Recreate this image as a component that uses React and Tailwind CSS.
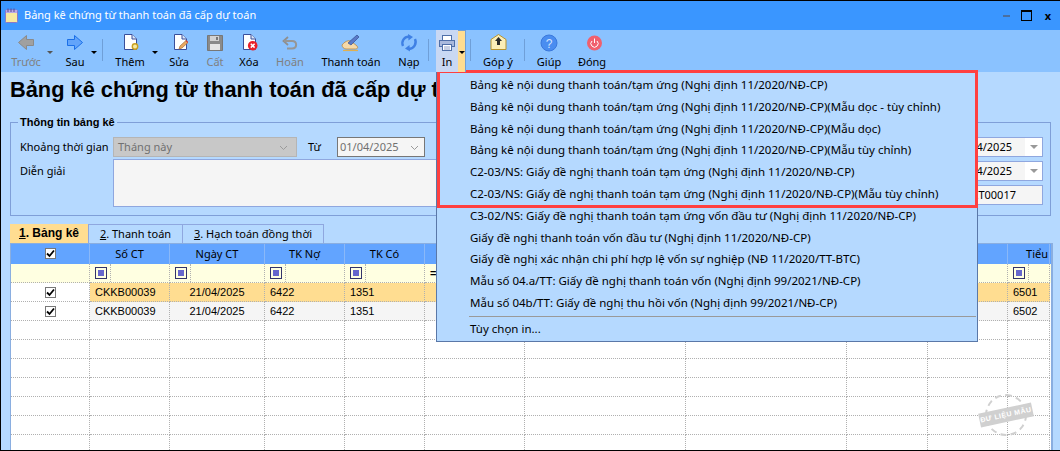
import React from "react";

const Arrow = ({ color, stroke, flip }) => (
  <svg width="18" height="18" viewBox="0 0 18 18" className={flip ? "-scale-x-100" : ""}>
    <path d="M1.5 8.5 L9.5 1.5 V5.5 H16.5 V11.5 H9.5 V15.5 Z" fill={color} stroke={stroke} />
  </svg>
);

const Page = ({ x = 3, children }) => (
  <svg width="18" height="18" viewBox="0 0 18 18">
    <path d={`M${x + 0.5} 0.5 H${x + 8} L${x + 12.5} 5 V15.5 H${x + 0.5} Z`} fill="#fff" stroke="#3a4f9a" />
    <path d={`M${x + 8} 0.5 V5 H${x + 12.5}`} fill="#dbe6f7" stroke="#3a4f9a" />
    {children}
  </svg>
);

const icons = {
  back: <Arrow color="#a0a0a0" stroke="#8a8a8a" />,
  next: <Arrow color="#62a4fa" stroke="#1a6fe8" flip />,
  add: (
    <Page>
      <circle cx="14" cy="12.5" r="2.7" fill="#f7e9a0" stroke="#c8a020" strokeWidth="1.4" />
    </Page>
  ),
  edit: (
    <Page x={4}>
      <path d="M9 15 L10 12 L16 6.5 L18 8.5 L12 14 Z" fill="#eaa860" stroke="#a8703a" strokeWidth="0.7" />
      <path d="M16 6.5 L18 8.5" stroke="#d04040" strokeWidth="1.2" />
    </Page>
  ),
  save: (
    <svg width="16" height="16" viewBox="0 0 16 16">
      <path d="M0.5 0.5 H15.5 V15.5 H0.5 Z" fill="#8a8a8a" stroke="#777" />
      <rect x="3" y="1" width="9" height="5" fill="#d2d2d2" />
      <rect x="9" y="2" width="2" height="3" fill="#777" />
      <rect x="3" y="9" width="10" height="6" fill="#e6e6e6" />
    </svg>
  ),
  del: (
    <Page>
      <circle cx="12.7" cy="11.7" r="4.8" fill="#e8202a" />
      <path d="M10.8 9.8 L14.6 13.6 M14.6 9.8 L10.8 13.6" stroke="#fff" strokeWidth="1.5" />
    </Page>
  ),
  undo: (
    <svg width="16" height="18" viewBox="0 0 16 18" fill="none">
      <path d="M6 3 L1.5 7 L6 11" stroke="#8f8f8f" strokeWidth="1.8" />
      <path d="M2 7 H10 C15.5 7 15.5 14.5 10 14.5 H5" stroke="#969696" strokeWidth="2" />
    </svg>
  ),
  pay: (
    <svg width="20" height="18" viewBox="0 0 20 18">
      <path d="M1 11 C5 6 9 6 11 8 L16 12 C17.5 14 16 15 14 15 H5 C3 15 1 13 1 11 Z" fill="#f6d9a8" stroke="#b8863f" strokeWidth="0.8" />
      <path d="M7 9 L16 1 L18 3 L10 11 Z" fill="#5a79c8" stroke="#33508f" strokeWidth="0.7" />
      <path d="M2 16.5 H17" stroke="#e0b050" strokeWidth="1.2" />
    </svg>
  ),
  reload: (
    <svg width="18" height="18" viewBox="0 0 18 18" fill="none">
      <path d="M3 12 C1 7 4 3 9 2.5" stroke="#3f80e4" strokeWidth="2.4" />
      <path d="M8 0 L13 3 L8.5 6.5 Z" fill="#3f80e4" />
      <path d="M15 5 C17 10 14 14.5 9 15" stroke="#3f80e4" strokeWidth="2.4" />
      <path d="M10 17.5 L5 14.5 L9.5 11 Z" fill="#3f80e4" />
    </svg>
  ),
  print: (
    <svg width="16" height="16" viewBox="0 0 16 16" fill="none" stroke="#4f6fa8">
      <rect x="3.5" y="0.5" width="9" height="5" fill="#fff" />
      <rect x="0.5" y="5.5" width="15" height="6" fill="#a9b9dd" />
      <rect x="3.5" y="9.5" width="9" height="6" fill="#fff" />
      <path d="M5 12 H11 M5 14 H11" stroke="#8fa0c8" />
    </svg>
  ),
  mail: (
    <svg width="18" height="18" viewBox="0 0 18 18">
      <path d="M2 5.5 L9.5 0.5 L17 5.5 V15.5 H2 Z" fill="#fbeeb8" stroke="#b8942f" />
      <path d="M9.5 3 L13 7 H11 V11 H8 V7 H6 Z" fill="#2b2b2b" />
    </svg>
  ),
  help: (
    <svg width="18" height="18" viewBox="0 0 18 18">
      <circle cx="9" cy="9" r="8" fill="#4a8df0" stroke="#3a78dc" />
      <text x="9" y="13.5" textAnchor="middle" fontSize="12" fill="#d0e3ff" fontFamily="Liberation Sans">?</text>
    </svg>
  ),
  power: (
    <svg width="20" height="18" viewBox="0 0 20 18" fill="none">
      <circle cx="12.5" cy="9" r="7.5" fill="#f0606e" />
      <path d="M10 7 A3.6 3.6 0 1 0 15 7" stroke="#fff" />
      <path d="M12.5 4.5 V9" stroke="#fff" />
    </svg>
  ),
};

const Tool = ({ icon, label, width, off, caret }) => (
  <div className={`relative flex flex-col items-center shrink-0 h-[42px] pt-[4px] ${width}`}>
    <div className="h-[18px] flex items-center justify-center">{icons[icon]}</div>
    <span className={`mt-[2px] leading-[15px] whitespace-nowrap ${off ? "text-[#808080]" : "text-black"}`}>{label}</span>
    {caret && <span className={`absolute top-[21px] w-0 h-0 border-x-[3px] border-t-[3px] border-x-transparent ${caret} ${off ? "border-t-[#555]" : "border-t-black"}`} />}
  </div>
);

const Sep = ({ className }) => <div className={`w-[1px] h-[22px] bg-[#6f9fd8] shrink-0 mt-[9px] ${className}`} />;

const menuItems = [
  "Bảng kê nội dung thanh toán/tạm ứng (Nghị định 11/2020/NĐ-CP)",
  "Bảng kê nội dung thanh toán/tạm ứng (Nghị định 11/2020/NĐ-CP)(Mẫu dọc - tùy chỉnh)",
  "Bảng kê nội dung thanh toán/tạm ứng (Nghị định 11/2020/NĐ-CP)(Mẫu dọc)",
  "Bảng kê nội dung thanh toán/tạm ứng (Nghị định 11/2020/NĐ-CP)(Mẫu tùy chỉnh)",
  "C2-03/NS: Giấy đề nghị thanh toán tạm ứng (Nghị định 11/2020/NĐ-CP)",
  "C2-03/NS: Giấy đề nghị thanh toán tạm ứng (Nghị định 11/2020/NĐ-CP)(Mẫu tùy chỉnh)",
  "C3-02/NS: Giấy đề nghị thanh toán tạm ứng vốn đầu tư (Nghị định 11/2020/NĐ-CP)",
  "Giấy đề nghị thanh toán vốn đầu tư (Nghị định 11/2020/NĐ-CP)",
  "Giấy đề nghị xác nhận chi phí hợp lệ vốn sự nghiệp (NĐ 11/2020/TT-BTC)",
  "Mẫu số 04.a/TT: Giấy đề nghị thanh toán vốn (Nghị định 99/2021/NĐ-CP)",
  "Mẫu số 04b/TT: Giấy đề nghị thu hồi vốn (Nghị định 99/2021/NĐ-CP)",
];

const gridCols = "grid grid-cols-[79px_80px_95px_80px_80px_100px_161px_161px_81px_80px_42px]";
const cell = "h-[19px] border-r border-b border-dotted border-[#b0b0b0] px-[5px] leading-[18px] truncate font-['Liberation_Sans',sans-serif]";

const Check = () => (
  <span className="mx-auto flex items-center justify-center w-[11px] h-[11px] mt-[4px] border border-[#777] bg-white">
    <svg width="9" height="9" viewBox="0 0 9 9" fill="none"><path d="M1 4.5 L3.5 7 L8 1.5" stroke="#000" strokeWidth="1.8" /></svg>
  </span>
);

const FilterBox = () => (
  <div className="flex h-full">
    <span className="block w-[12px] h-[12px] mt-[3px] border border-[#33336b] p-[2px] shrink-0"><span className="block w-full h-full bg-[#6666cc]" /></span>
    <span className="ml-[3px] h-full border-l border-dotted border-[#b0b0b0]" />
  </div>
);

const Row = ({ doc, sub, active }) => {
  const bg = active ? "bg-[#ffdd91]" : "bg-[#f5f5f5]";
  return (
    <div className={gridCols}>
      <div className={`${cell} bg-white`}><Check /></div>
      <div className={`${cell} ${bg}`}>{doc}</div>
      <div className={`${cell} ${bg} text-center`}>21/04/2025</div>
      <div className={`${cell} ${bg}`}>6422</div>
      <div className={`${cell} ${bg}`}>1351</div>
      {[0, 1, 2, 3, 4].map((i) => <div key={i} className={`${cell} ${bg}`} />)}
      <div className={`${cell} ${bg}`}>{sub}</div>
    </div>
  );
};

const Blank = () => (
  <div className={gridCols}>
    {[0, 1, 2, 3, 4, 5, 6, 7, 8, 9, 10].map((i) => <div key={i} className={`${cell} bg-white`} />)}
  </div>
);

const DateBox = () => (
  <div className="h-[20px] border border-[#8fa7df] bg-[#f5f5f5] flex justify-end">
    <span className="leading-[18px] pr-[13px]">30/04/2025</span>
    <span className="w-[17px] h-full bg-white flex items-center justify-center"><span className="w-0 h-0 border-x-[4px] border-t-[4px] border-x-transparent border-t-[#999]" /></span>
  </div>
);

export default function App() {
  return (
    <div className="relative w-[1060px] h-[451px] overflow-hidden bg-white text-[11px] text-black font-['Noto_Sans',sans-serif]">
      <div className="h-[451px] border-t border-l border-b border-black bg-[#b5d9ff] flex flex-col">
        {/* title bar */}
        <div className="h-[29px] bg-[#3a96ff] flex items-center shrink-0 pl-[4px]">
          <svg width="14" height="15" viewBox="0 0 14 15">
            <rect x="0.5" y="2" width="12" height="12.5" rx="1" fill="#f6e9a0" stroke="#8a78c8" />
            <path d="M1 2 H12 V5 H1 Z" fill="#b8a8e8" />
            <path d="M3 0.5 V4 M6 0.5 V4 M9 0.5 V4" stroke="#5a4a90" />
          </svg>
          <span className="ml-[5px] text-white">Bảng kê chứng từ thanh toán đã cấp dự toán</span>
          <div className="ml-auto flex items-center pr-[8px]">
            <span className="w-[7px] h-[2px] bg-[#4a6f9f]" />
            <span className="ml-[11px] w-[11px] h-[11px] border border-t-2 border-black" />
            <span className="ml-[12px] w-[8px] text-center text-[11px] font-bold leading-none">x</span>
          </div>
        </div>

        {/* toolbar */}
        <div className="h-[42px] bg-[#8ac2ff] flex shrink-0">
          <Tool icon="back" label="Trước" width="w-[50px]" off caret="right-[-2px]" />
          <Tool icon="next" label="Sau" width="w-[48px]" caret="right-[2px]" />
          <Sep className="ml-[3px] mr-[3px]" />
          <Tool icon="add" label="Thêm" width="w-[48px]" caret="right-[-4px]" />
          <Tool icon="edit" label="Sửa" width="w-[50px]" />
          <Tool icon="save" label="Cất" width="w-[22px]" off />
          <Tool icon="del" label="Xóa" width="w-[46px]" />
          <Tool icon="undo" label="Hoãn" width="w-[36px]" off />
          <Tool icon="pay" label="Thanh toán" width="w-[86px]" />
          <Tool icon="reload" label="Nạp" width="w-[30px]" />
          <Sep className="ml-[4px] mr-[7px]" />
          <div className="flex h-[42px] shrink-0 z-10">
            <div className="w-[22px] h-full bg-[#c9d8f3] pt-[4px]">
              <div className="h-[18px] flex items-center justify-center">{icons.print}</div>
              <div className="text-center leading-[15px] mt-[2px]">In</div>
            </div>
            <div className="relative w-[8px] h-full bg-[#ffdd91] border-t border-r border-[#6f9fd8]">
              <span className="absolute left-[1px] top-[20px] w-0 h-0 border-x-[3px] border-t-[3px] border-x-transparent border-t-black" />
            </div>
          </div>
          <Sep className="ml-[4px] mr-[3px]" />
          <Tool icon="mail" label="Góp ý" width="w-[48px]" />
          <Sep className="ml-[2px] mr-[3px]" />
          <Tool icon="help" label="Giúp" width="w-[42px]" />
          <Tool icon="power" label="Đóng" width="w-[44px]" />
        </div>

        {/* heading */}
        <h1 className="h-[42px] shrink-0 pl-[9px] pt-[4px] text-[21.8px] leading-[28px] font-bold whitespace-nowrap font-['Liberation_Sans',sans-serif]">
          Bảng kê chứng từ thanh toán đã cấp dự toán
        </h1>

        {/* info group */}
        <fieldset className="shrink-0 h-[102px] ml-[9px] w-[1041px] border border-[#7f9fd8] pl-[9px] pr-[7px]">
          <legend className="ml-[-2px] px-[2px] font-bold text-[11px] leading-[16px] font-['Liberation_Sans',sans-serif]">Thông tin bảng kê</legend>
          <div className="flex justify-between mt-[7px]">
            <div className="flex flex-col gap-[2px]">
              <div className="flex items-center h-[20px]">
                <span className="w-[93px]">Khoảng thời gian</span>
                <div className="w-[184px] h-[20px] bg-[#c8c8c8] border border-[#b5b5b5] text-[#707070] pl-[4px] leading-[18px] flex justify-between pr-[8px]">
                  Tháng này
                  <svg width="9" height="18" viewBox="0 0 9 18" fill="none"><path d="M1 8 L4.5 11.5 L8 8" stroke="#9a9a9a" /></svg>
                </div>
                <span className="ml-[11px] w-[29px]">Từ</span>
                <div className="w-[88px] h-[20px] bg-[#f5f5f5] border border-[#777] text-[#707070] pl-[2px] leading-[18px] flex justify-between pr-[5px]">
                  01/04/2025
                  <svg width="9" height="18" viewBox="0 0 9 18" fill="none"><path d="M1 8 L4.5 11.5 L8 8" stroke="#9a9a9a" /></svg>
                </div>
              </div>
              <div className="flex">
                <span className="w-[93px] pt-[4px]">Diễn giải</span>
                <div className="w-[817px] h-[48px] bg-[#f5f5f5] border border-[#8fa7df]" />
              </div>
            </div>
            <div className="w-[110px] flex flex-col gap-[4px]">
              <DateBox />
              <DateBox />
              <div className="h-[20px] border border-[#8fa7df] bg-[#f5f5f5] text-right pr-[26px] leading-[18px]">CT00017</div>
            </div>
          </div>
        </fieldset>

        {/* tabs */}
        <div className="flex shrink-0 mt-[8px] ml-[9px] h-[19px]">
          <div className="w-[78px] bg-[#ffdd91] text-center text-[12px] font-bold leading-[18px] font-['Liberation_Sans',sans-serif]"><u>1</u>. Bảng kê</div>
          <div className="w-[95px] border border-b-0 border-[#8fa7df] text-center leading-[17px]"><u>2</u>. Thanh toán</div>
          <div className="w-[141px] border border-b-0 border-l-0 border-[#8fa7df] text-center leading-[17px]"><u>3</u>. Hạch toán đồng thời</div>
        </div>

        {/* grid */}
        <div className="ml-[9px] w-[1043px] border-l border-r-2 border-t border-[#8aaee0] flex-1 overflow-hidden bg-white">
          <div className={`${gridCols} bg-[#62a4ff] h-[20px]`}>
            <div className="border-r border-[#8ab8f8]"><Check /></div>
            {["Số CT", "Ngày CT", "TK Nợ", "TK Có", "", "", "", "", "", "Tiểu"].map((h, i) => (
              <div key={i} className={`border-r border-[#8ab8f8] leading-[20px] ${h === "Tiểu" ? "text-right pr-[1px]" : "text-center"}`}>{h}</div>
            ))}
          </div>
          <div className={`${gridCols} bg-[#ffffe1]`}>
            <div className={cell} />
            <div className={cell}><FilterBox /></div>
            <div className={cell}><FilterBox /></div>
            <div className={cell}><FilterBox /></div>
            <div className={cell}><FilterBox /></div>
            <div className={`${cell} font-bold`}>=</div>
            {[0, 1, 2, 3].map((i) => <div key={i} className={cell} />)}
            <div className={cell}><FilterBox /></div>
          </div>
          <Row doc="CKKB00039" sub="6501" active />
          <Row doc="CKKB00039" sub="6502" />
          {[0, 1, 2, 3, 4, 5, 6].map((i) => <Blank key={i} />)}
        </div>
      </div>

      {/* print dropdown */}
      <div className="absolute left-[436px] top-[72px] w-[542px] h-[270px] bg-[#b5d9ff] border border-[#5a78a8] pl-[33px] pt-[1px] text-[11.5px]">
        {menuItems.map((t) => (
          <div key={t} className="h-[21.8px] leading-[21px] whitespace-nowrap">{t}</div>
        ))}
        <div className="h-[1px] bg-[#9a9a9a] mt-[2px] mb-[1px] ml-[-1px] mr-[1px]" />
        <div className="h-[22px] leading-[21px]">Tùy chọn in...</div>
      </div>

      {/* red highlight */}
      <div className="absolute left-[437px] top-[70px] w-[541px] h-[138px] border-[3px] border-[#ff4040]" />

      {/* stamp */}
      <div className="absolute left-[979px] top-[392px] w-[54px] h-[45px] flex items-center justify-center">
        <span className="absolute w-[42px] h-[42px] rounded-full border-2 border-dashed border-[#d0d0d0]" />
        <span className="-rotate-12 w-[54px] text-center bg-[#d0d0d0] text-white text-[7px] font-bold leading-[14px] tracking-[0.5px] whitespace-nowrap font-['Liberation_Sans',sans-serif]">ĐƯ LIỆU MẪU</span>
      </div>
    </div>
  );
}
